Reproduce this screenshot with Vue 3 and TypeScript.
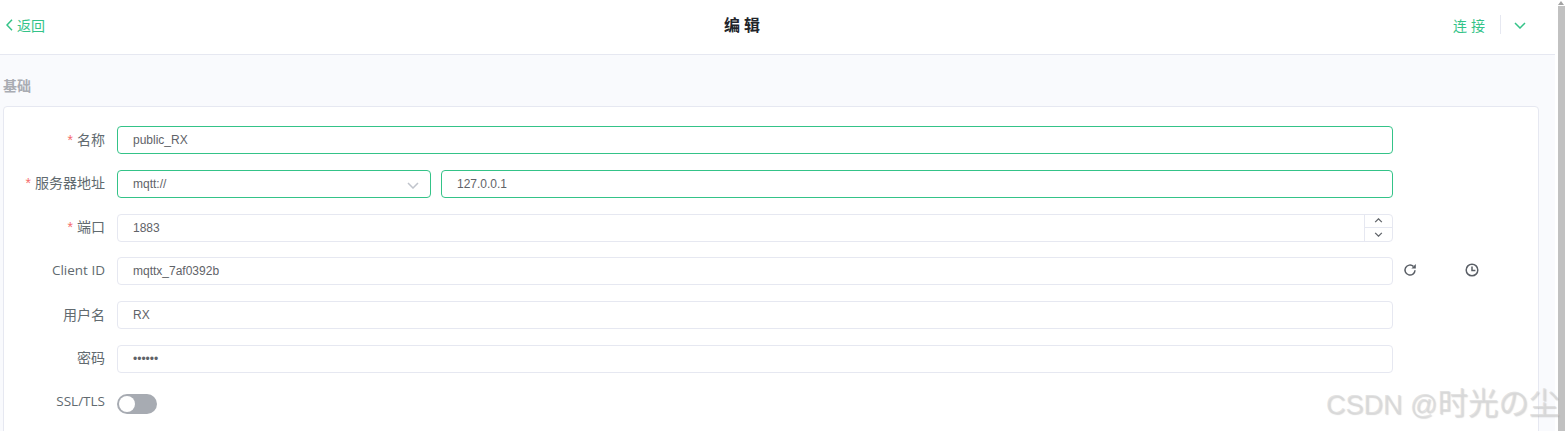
<template>
  <div class="window">
    <div class="page">
      <header class="topbar">
        <a class="back">
          <svg class="back-icon" viewBox="0 0 7 12"><path d="M6 .8 1 6l5 5.2" /></svg>
          <span>返回</span>
        </a>
        <h1 class="title">编辑</h1>
        <div class="actions">
          <span class="connect">连接</span>
          <i class="divider"></i>
          <svg class="more" viewBox="0 0 12 7"><path d="M1 1l5 5 5-5" /></svg>
        </div>
      </header>

      <main class="content">
        <div class="section-title">基础</div>
        <section class="card">
          <div v-for="row in rows" :key="row.label" class="row">
            <label class="label" :class="{ latin: row.latin }"><em v-if="row.required">*</em>{{ row.label }}</label>
            <div class="field">
              <template v-if="row.kind === 'server'">
                <div class="input select focus">
                  mqtt://
                  <svg class="select-arrow" viewBox="0 0 12 7"><path d="M1 1l5 5 5-5" /></svg>
                </div>
                <div class="input host focus">{{ row.value }}</div>
              </template>
              <div v-else-if="row.kind === 'port'" class="input wide port">
                {{ row.value }}
                <div class="stepper">
                  <span><svg viewBox="0 0 10 6"><path d="M1 5l4-4 4 4" /></svg></span>
                  <span><svg viewBox="0 0 10 6"><path d="M1 1l4 4 4-4" /></svg></span>
                </div>
              </div>
              <div v-else-if="row.kind === 'switch'" class="switch"><i></i></div>
              <div v-else class="input wide" :class="{ focus: row.focus }">{{ row.value }}</div>
              <div v-if="row.kind === 'client'" class="client-tools">
                <svg class="tool" viewBox="0 0 14 14">
                  <path d="M12 7.2A5 5 0 1 1 10.4 3.4" />
                  <path class="fill" d="M8.4 5.4h4.4V1z" />
                </svg>
                <svg class="tool" viewBox="0 0 14 14">
                  <circle cx="7" cy="7" r="5.8" />
                  <path d="M7 3.6V7.6h3.4" />
                </svg>
              </div>
            </div>
          </div>
        </section>
      </main>
    </div>

    <div class="scrollbar">
      <i class="arrow"></i>
      <b class="thumb"></b>
    </div>

    <div class="watermark">CSDN @<span>时光の尘</span></div>
  </div>
</template>

<script setup lang="ts">
interface Row {
  label: string;
  required?: boolean;
  latin?: boolean;
  kind?: "server" | "port" | "client" | "switch";
  value?: string;
  focus?: boolean;
}

const rows: Row[] = [
  { label: "名称", required: true, value: "public_RX", focus: true },
  { label: "服务器地址", required: true, kind: "server", value: "127.0.0.1" },
  { label: "端口", required: true, kind: "port", value: "1883" },
  { label: "Client ID", latin: true, kind: "client", value: "mqttx_7af0392b" },
  { label: "用户名", value: "RX" },
  { label: "密码", value: "••••••" },
  { label: "SSL/TLS", latin: true, kind: "switch" },
];
</script>

<style>
html,
body {
  margin: 0;
  overflow: hidden;
  background: #fff;
}
</style>

<style scoped>
.window {
  position: relative;
  display: flex;
  width: 1565px;
  height: 431px;
  overflow: hidden;
  font-family: "Liberation Sans", "Noto Sans CJK SC", sans-serif;
  color: #5f6368;
}
.page {
  width: 1555px;
  flex: none;
  display: flex;
  flex-direction: column;
  min-height: 0;
}
.topbar {
  flex: none;
  box-sizing: content-box;
  height: 49px;
  padding: 0 29px 5px 6px;
  border-bottom: 1px solid #e6e8f1;
  background: #fff;
  display: flex;
  align-items: center;
  justify-content: space-between;
  position: relative;
}
.back {
  display: flex;
  align-items: center;
  gap: 4px;
  color: #34c388;
  font-size: 14px;
}
.back-icon {
  width: 7px;
  height: 12px;
}
svg path,
svg circle {
  fill: none;
  stroke: currentColor;
  stroke-width: 1.5;
}
.title {
  margin: 0;
  position: absolute;
  left: 724px;
  top: 16px;
  font-size: 16px;
  line-height: 20px;
  font-weight: 700;
  letter-spacing: 4px;
  color: #22242a;
}
.actions {
  display: flex;
  align-items: center;
  color: #34c388;
}
.connect {
  font-size: 14px;
  letter-spacing: 4px;
}
.divider {
  width: 1px;
  height: 19px;
  background: #e6e8f1;
  margin: 0 13px 0 11px;
}
.more {
  width: 12px;
  height: 7px;
  margin-top: 2px;
}
.content {
  flex: 1;
  min-height: 0;
  background: #f9fafd;
  padding: 0 16px 0 3px;
}
.section-title {
  height: 51px;
  line-height: 62px;
  font-size: 14px;
  font-weight: 700;
  color: #a9acb3;
}
.card {
  background: #fff;
  border: 1px solid #e6e8f1;
  border-radius: 4px;
  padding: 19px 0 30px;
  display: flex;
  flex-direction: column;
  gap: 15.8px;
}
.row {
  display: flex;
  align-items: center;
  height: 28px;
}
.label {
  width: 101px;
  flex: none;
  box-sizing: border-box;
  padding-bottom: 3px;
  text-align: right;
  font-size: 14px;
  color: #616a6f;
  margin-right: 12px;
}
.latin {
  font-family: "Open Sans", sans-serif;
  font-size: 13.5px;
}
.label em {
  font-style: normal;
  font-family: "Liberation Sans", sans-serif;
  color: #f56c6c;
  margin-right: 4px;
}
.field {
  display: flex;
  align-items: center;
  gap: 10px;
}
.input {
  box-sizing: border-box;
  height: 28px;
  line-height: 26px;
  padding: 0 15px;
  font-size: 12px;
  color: #5f6368;
  background: #fff;
  border: 1px solid #e6e8f1;
  border-radius: 4px;
  position: relative;
}
.focus {
  border-color: #34c388;
}
.wide {
  width: 1276px;
}
.select {
  width: 314px;
}
.select-arrow {
  position: absolute;
  right: 11px;
  top: 11px;
  width: 12px;
  height: 7px;
  color: #c0c4cc;
}
.host {
  width: 952px;
}
.stepper {
  position: absolute;
  top: 0;
  right: 0;
  bottom: 0;
  width: 27px;
  border-left: 1px solid #e6e8f1;
  display: flex;
  flex-direction: column;
  color: #5f6368;
}
.stepper span {
  flex: 1;
  display: flex;
  align-items: center;
  justify-content: center;
}
.stepper span + span {
  border-top: 1px solid #e6e8f1;
}
.stepper svg {
  width: 9px;
  height: 5px;
}
.client-tools {
  display: flex;
  align-items: center;
  gap: 48px;
  margin-top: -2px;
  color: #5a5f66;
}
.tool {
  width: 14px;
  height: 14px;
}
.tool .fill {
  fill: currentColor;
  stroke: none;
}
.switch {
  width: 40px;
  height: 20px;
  margin-top: 2px;
  border-radius: 10px;
  background: #a7abb2;
  position: relative;
}
.switch i {
  position: absolute;
  left: 2px;
  top: 2px;
  width: 16px;
  height: 16px;
  border-radius: 50%;
  background: #fff;
}
.scrollbar {
  flex: 1;
  background: #fff;
  padding-left: 2px;
  display: flex;
  flex-direction: column;
  align-items: center;
}
.arrow {
  width: 0;
  height: 0;
  margin-top: 1px;
  border-left: 3px solid transparent;
  border-right: 3px solid transparent;
  border-bottom: 4px solid #a3a3a3;
}
.thumb {
  width: 7px;
  margin-top: 1px;
  flex: 1;
  background: #c1c1c1;
}
.watermark {
  position: absolute;
  left: 1326px;
  top: 404px;
  transform: translateY(-50%);
  font-size: 27px;
  line-height: 36px;
  white-space: nowrap;
  color: rgba(215, 215, 215, 0.7);
  text-shadow: 1px 1px 1px rgba(150, 150, 150, 0.35);
  font-family: "Liberation Sans", "Noto Sans CJK JP", sans-serif;
}
.watermark span {
  font-size: 30.5px;
}
</style>
